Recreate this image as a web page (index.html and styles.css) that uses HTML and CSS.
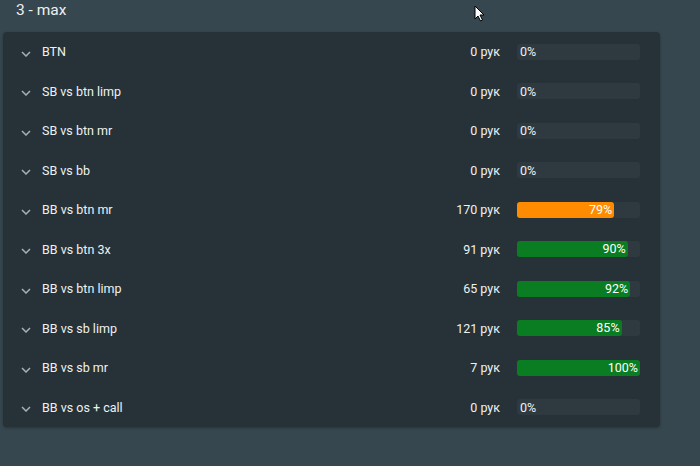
FILE: index.html
```html
<!DOCTYPE html>
<html>
<head>
<meta charset="utf-8">
<link rel="stylesheet" href="styles.css">
</head>
<body>
<div class="page">
  <h2 class="title">3 - max</h2>
  <div class="card">
    <div class="row"><span class="chev"><svg width="10" height="6" viewBox="0 0 10 6"><path d="M1 1l4 4 4-4" fill="none" stroke="#a9b0b4" stroke-width="1.5"/></svg></span><span class="name">BTN</span><span class="hands">0 рук</span><div class="track"><span class="zero">0%</span></div></div>
    <div class="row"><span class="chev"><svg width="10" height="6" viewBox="0 0 10 6"><path d="M1 1l4 4 4-4" fill="none" stroke="#a9b0b4" stroke-width="1.5"/></svg></span><span class="name">SB vs btn limp</span><span class="hands">0 рук</span><div class="track"><span class="zero">0%</span></div></div>
    <div class="row"><span class="chev"><svg width="10" height="6" viewBox="0 0 10 6"><path d="M1 1l4 4 4-4" fill="none" stroke="#a9b0b4" stroke-width="1.5"/></svg></span><span class="name">SB vs btn mr</span><span class="hands">0 рук</span><div class="track"><span class="zero">0%</span></div></div>
    <div class="row"><span class="chev"><svg width="10" height="6" viewBox="0 0 10 6"><path d="M1 1l4 4 4-4" fill="none" stroke="#a9b0b4" stroke-width="1.5"/></svg></span><span class="name">SB vs bb</span><span class="hands">0 рук</span><div class="track"><span class="zero">0%</span></div></div>
    <div class="row"><span class="chev"><svg width="10" height="6" viewBox="0 0 10 6"><path d="M1 1l4 4 4-4" fill="none" stroke="#a9b0b4" stroke-width="1.5"/></svg></span><span class="name">BB vs btn mr</span><span class="hands">170 рук</span><div class="track"><div class="fill orange" style="width:79%">79%</div></div></div>
    <div class="row"><span class="chev"><svg width="10" height="6" viewBox="0 0 10 6"><path d="M1 1l4 4 4-4" fill="none" stroke="#a9b0b4" stroke-width="1.5"/></svg></span><span class="name">BB vs btn 3x</span><span class="hands">91 рук</span><div class="track"><div class="fill green" style="width:90%">90%</div></div></div>
    <div class="row"><span class="chev"><svg width="10" height="6" viewBox="0 0 10 6"><path d="M1 1l4 4 4-4" fill="none" stroke="#a9b0b4" stroke-width="1.5"/></svg></span><span class="name">BB vs btn limp</span><span class="hands">65 рук</span><div class="track"><div class="fill green" style="width:92%">92%</div></div></div>
    <div class="row"><span class="chev"><svg width="10" height="6" viewBox="0 0 10 6"><path d="M1 1l4 4 4-4" fill="none" stroke="#a9b0b4" stroke-width="1.5"/></svg></span><span class="name">BB vs sb limp</span><span class="hands">121 рук</span><div class="track"><div class="fill green" style="width:85%">85%</div></div></div>
    <div class="row"><span class="chev"><svg width="10" height="6" viewBox="0 0 10 6"><path d="M1 1l4 4 4-4" fill="none" stroke="#a9b0b4" stroke-width="1.5"/></svg></span><span class="name">BB vs sb mr</span><span class="hands">7 рук</span><div class="track"><div class="fill green" style="width:100%">100%</div></div></div>
    <div class="row"><span class="chev"><svg width="10" height="6" viewBox="0 0 10 6"><path d="M1 1l4 4 4-4" fill="none" stroke="#a9b0b4" stroke-width="1.5"/></svg></span><span class="name">BB vs os + call</span><span class="hands">0 рук</span><div class="track"><span class="zero">0%</span></div></div>
  </div>
  <svg class="cursor" width="12" height="18" viewBox="0 0 12 18"><path d="M1 1v13l3-3 2.5 5 2-1-2.5-5h4z" fill="#fff" stroke="#000" stroke-width="1"/></svg>
</div>
</body>
</html>
```

FILE: styles.css
```css
html, body {
  margin: 0;
  padding: 0;
  background: #37474f;
  font-family: Roboto, "Liberation Sans", sans-serif;
  color: #eef1f2;
}
.page {
  position: relative;
  width: 700px;
  height: 466px;
  padding: 0 40px 0 3px;
  box-sizing: border-box;
}
.title {
  margin: 0;
  height: 32px;
  padding-left: 13px;
  font-size: 15.5px;
  font-weight: 400;
  line-height: 20px;
  color: #eef1f2;
}
.card {
  background: #263238;
  border-radius: 4px;
  box-shadow: 0 1px 3px rgba(0,0,0,0.3);
  width: 657px;
}
.row {
  height: 39.5px;
  display: flex;
  align-items: center;
  font-size: 12.5px;
}
.chev {
  width: 10px;
  margin-left: 18px;
  margin-right: 11px;
  display: flex;
  align-items: center;
  padding-top: 4px;
}
.name {
  flex: 1;
}
.hands {
  width: 100px;
  text-align: right;
  margin-right: 17px;
}
.track {
  width: 123px;
  height: 16px;
  background: #2f3a40;
  border-radius: 3px;
  margin-right: 20px;
  display: flex;
  align-items: center;
  font-size: 12.5px;
}
.zero {
  padding-left: 3px;
}
.fill {
  height: 16px;
  border-radius: 3px;
  text-align: right;
  box-sizing: border-box;
  padding-right: 2px;
  line-height: 16px;
  color: #fff;
}
.orange { background: #ff8c00; }
.green { background: #0a7d22; }
.cursor {
  position: absolute;
  left: 474px;
  top: 5px;
}
```
